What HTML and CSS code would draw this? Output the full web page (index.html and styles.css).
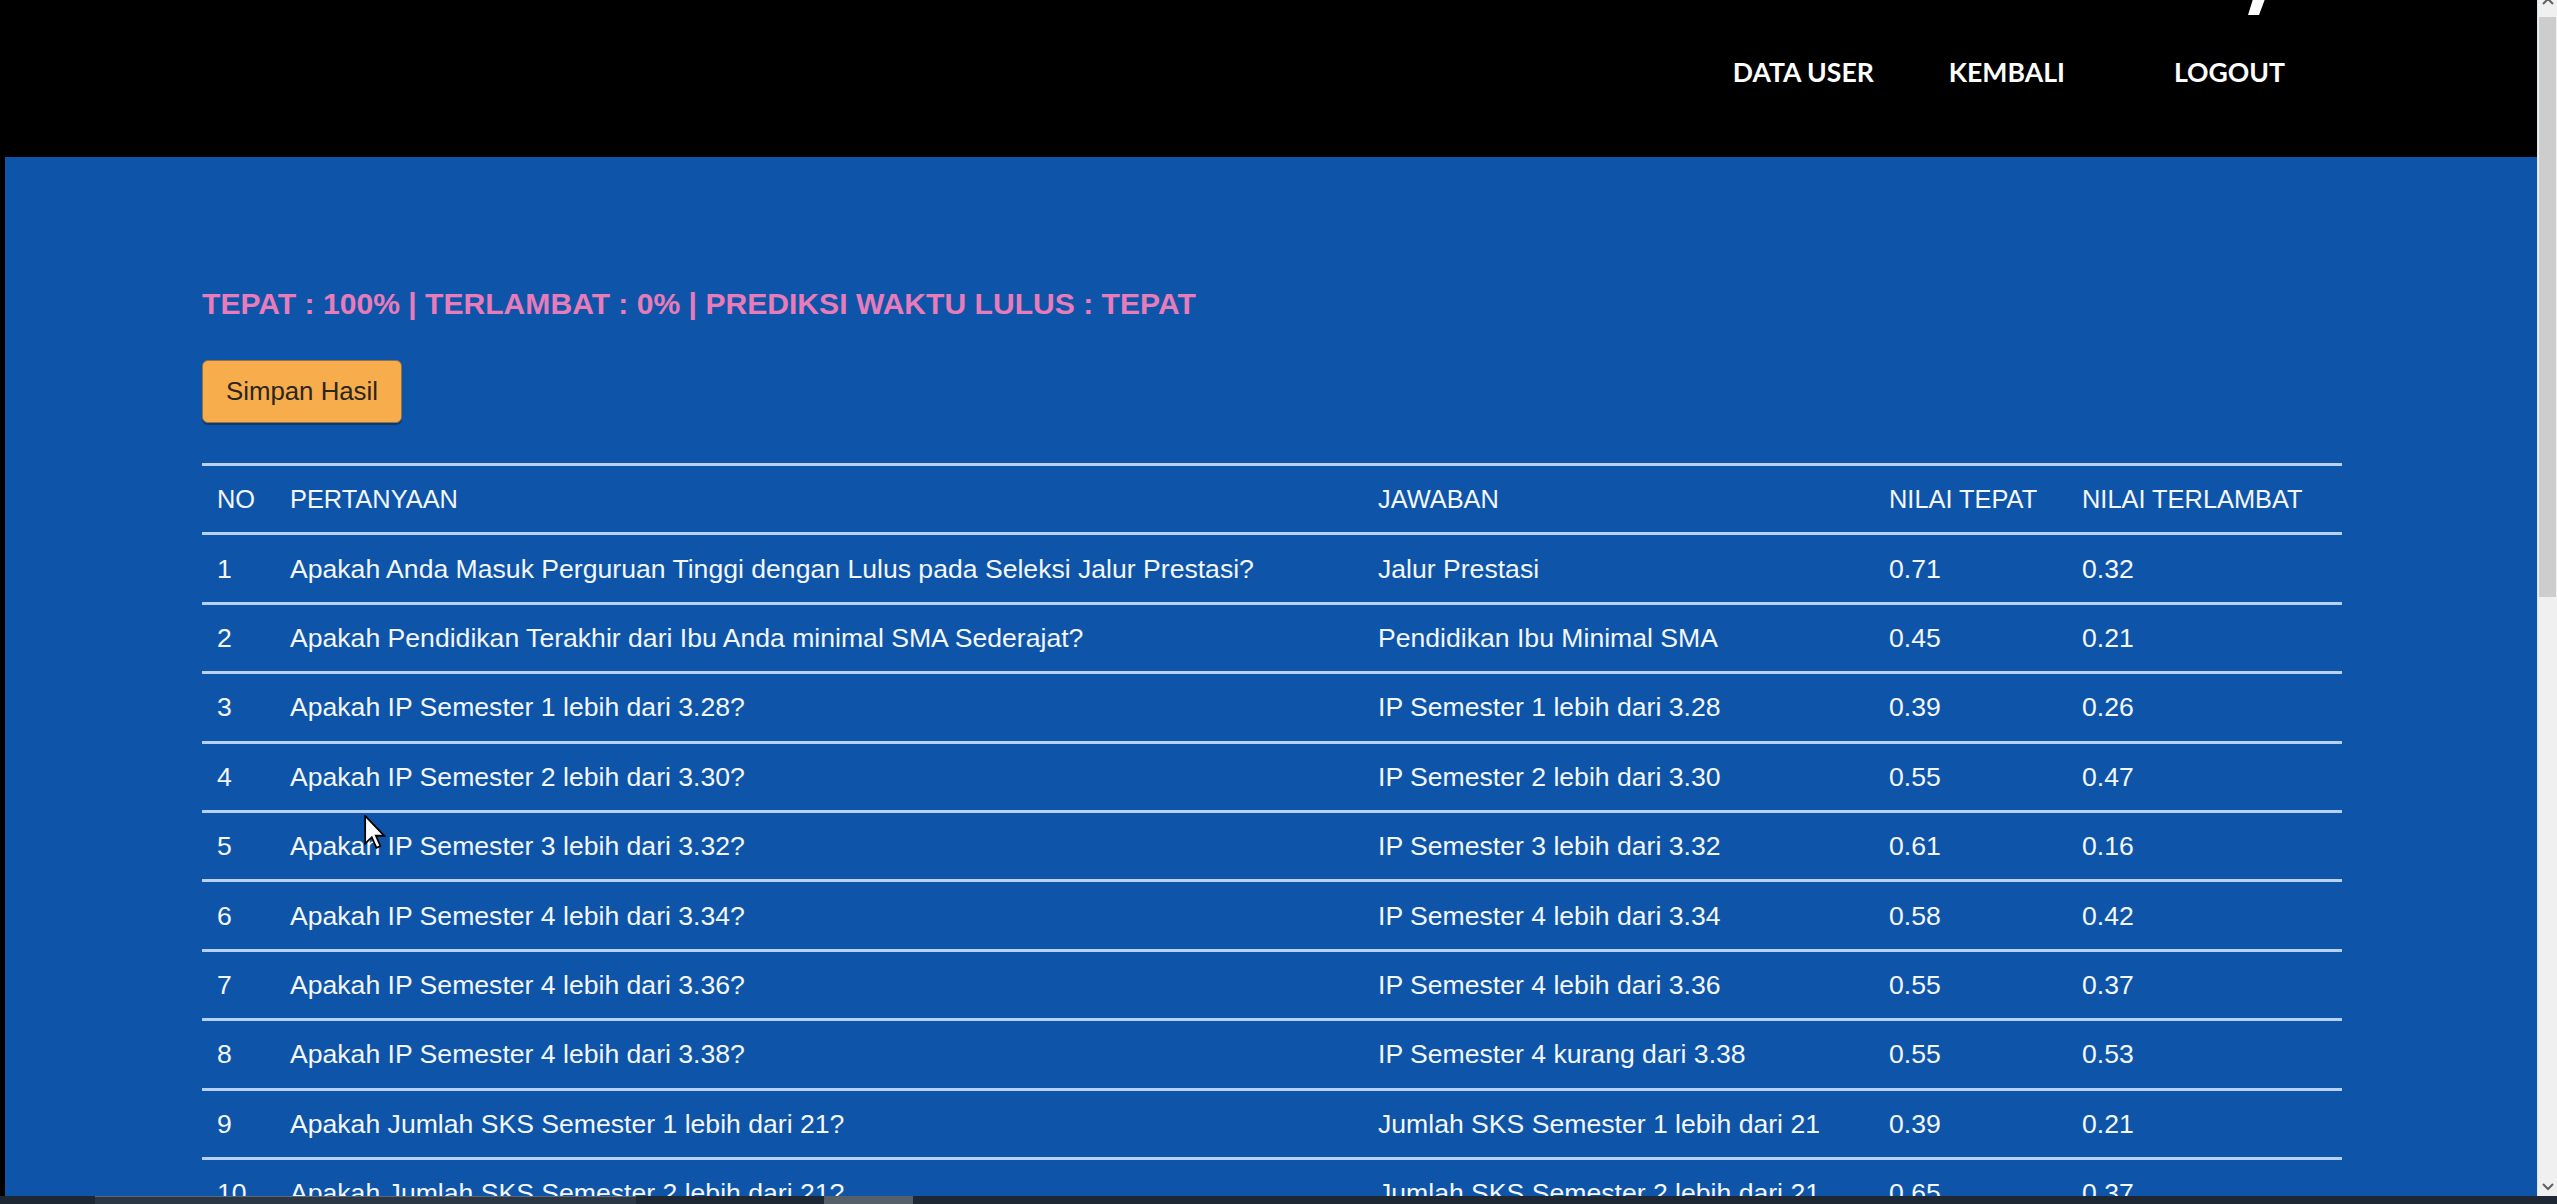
FILE: index.html
```html
<!DOCTYPE html>
<html lang="id">
<head>
<meta charset="utf-8">
<title>Hasil Prediksi</title>
<link rel="stylesheet" href="styles.css">
</head>
<body>
<div class="page">
  <div class="main">
    <header class="header">
      <div class="logo-row">
        <svg class="logo-frag" width="24" height="16" viewBox="0 0 24 16"><polygon points="8,0 20,0 14,16 3,16" fill="#ffffff"/></svg>
      </div>
      <nav class="nav">
        <a class="nav-link" href="#">DATA USER</a>
        <a class="nav-link nav-kembali" href="#">KEMBALI</a>
        <a class="nav-link nav-logout" href="#">LOGOUT</a>
      </nav>
    </header>
    <section class="content">
      <div class="container">
        <h3 class="result">TEPAT : 100% | TERLAMBAT : 0% | PREDIKSI WAKTU LULUS : TEPAT</h3>
        <button class="btn-save" type="button">Simpan Hasil</button>
        <div class="table">
          <div class="row head">
            <div class="cell">NO</div><div class="cell">PERTANYAAN</div><div class="cell">JAWABAN</div><div class="cell">NILAI TEPAT</div><div class="cell">NILAI TERLAMBAT</div>
          </div>
          <div class="row">
            <div class="cell">1</div><div class="cell">Apakah Anda Masuk Perguruan Tinggi dengan Lulus pada Seleksi Jalur Prestasi?</div><div class="cell">Jalur Prestasi</div><div class="cell">0.71</div><div class="cell">0.32</div>
          </div>
          <div class="row">
            <div class="cell">2</div><div class="cell">Apakah Pendidikan Terakhir dari Ibu Anda minimal SMA Sederajat?</div><div class="cell">Pendidikan Ibu Minimal SMA</div><div class="cell">0.45</div><div class="cell">0.21</div>
          </div>
          <div class="row">
            <div class="cell">3</div><div class="cell">Apakah IP Semester 1 lebih dari 3.28?</div><div class="cell">IP Semester 1 lebih dari 3.28</div><div class="cell">0.39</div><div class="cell">0.26</div>
          </div>
          <div class="row">
            <div class="cell">4</div><div class="cell">Apakah IP Semester 2 lebih dari 3.30?</div><div class="cell">IP Semester 2 lebih dari 3.30</div><div class="cell">0.55</div><div class="cell">0.47</div>
          </div>
          <div class="row">
            <div class="cell">5</div><div class="cell">Apakah IP Semester 3 lebih dari 3.32?</div><div class="cell">IP Semester 3 lebih dari 3.32</div><div class="cell">0.61</div><div class="cell">0.16</div>
          </div>
          <div class="row">
            <div class="cell">6</div><div class="cell">Apakah IP Semester 4 lebih dari 3.34?</div><div class="cell">IP Semester 4 lebih dari 3.34</div><div class="cell">0.58</div><div class="cell">0.42</div>
          </div>
          <div class="row">
            <div class="cell">7</div><div class="cell">Apakah IP Semester 4 lebih dari 3.36?</div><div class="cell">IP Semester 4 lebih dari 3.36</div><div class="cell">0.55</div><div class="cell">0.37</div>
          </div>
          <div class="row">
            <div class="cell">8</div><div class="cell">Apakah IP Semester 4 lebih dari 3.38?</div><div class="cell">IP Semester 4 kurang dari 3.38</div><div class="cell">0.55</div><div class="cell">0.53</div>
          </div>
          <div class="row">
            <div class="cell">9</div><div class="cell">Apakah Jumlah SKS Semester 1 lebih dari 21?</div><div class="cell">Jumlah SKS Semester 1 lebih dari 21</div><div class="cell">0.39</div><div class="cell">0.21</div>
          </div>
          <div class="row">
            <div class="cell">10</div><div class="cell">Apakah Jumlah SKS Semester 2 lebih dari 21?</div><div class="cell">Jumlah SKS Semester 2 lebih dari 21</div><div class="cell">0.65</div><div class="cell">0.37</div>
          </div>
        </div>
      </div>
    </section>
  </div>
  <div class="scrollbar">
    <div class="sb-up"><svg width="14" height="8" viewBox="0 0 14 8"><polyline points="2,7 7,2 12,7" fill="none" stroke="#606060" stroke-width="2"/></svg></div>
    <div class="sb-thumb"></div>
    <div class="sb-track"></div>
    <div class="sb-down"><svg width="14" height="8" viewBox="0 0 14 8"><polyline points="2,1 7,6 12,1" fill="none" stroke="#606060" stroke-width="2"/></svg></div>
  </div>
</div>
<svg class="cursor" width="22" height="34" viewBox="0 0 12 19"><path d="M0.5,0.5 L0.5,16 L4.2,12.4 L6.8,18.3 L9,17.3 L6.5,11.6 L11.2,11.6 Z" fill="#ffffff" stroke="#000000" stroke-width="1"/></svg>
<div class="taskbar">
  <div class="tb-seg tb-app"></div>
  <div class="tb-seg tb-light"></div>
</div>
</body>
</html>
```

FILE: styles.css
```css
html, body {
  margin: 0;
  padding: 0;
  height: 100%;
  overflow: hidden;
  background: #000000;
  font-family: "Liberation Sans", Arial, sans-serif;
}

.page {
  display: flex;
  height: 100vh;
}

.main {
  flex: 1;
  display: flex;
  flex-direction: column;
  min-width: 0;
  overflow: hidden;
}

.header {
  height: 157px;
  flex: none;
  background: #000000;
  display: flex;
  flex-direction: column;
}

.logo-row {
  height: 16px;
  padding-left: 2245px;
}

.logo-frag {
  display: block;
  margin-top: -1px;
}

.nav {
  display: flex;
  justify-content: flex-end;
  padding-right: 252px;
  margin-top: 43px;
}

.nav-link {
  font-family: Lato, "Liberation Sans", sans-serif;
  font-weight: 700;
  font-size: 26.6px;
  line-height: 26px;
  color: #ffffff;
  text-decoration: none;
}

.nav-kembali {
  margin-left: 75px;
}

.nav-logout {
  margin-left: 109px;
}

.content {
  flex: 1;
  background: #0e55a9;
  margin-left: 5px;
  padding: 129px 0 0 197px;
}

.container {
  width: 2140px;
}

.result {
  margin: 0;
  font-size: 30.1px;
  line-height: 36px;
  font-weight: 700;
  color: #e87cba;
}

.btn-save {
  display: block;
  margin-top: 38px;
  width: 200px;
  height: 63px;
  padding: 0;
  background: #f7ad4b;
  border: 1px solid #8f7446;
  border-radius: 6px;
  box-shadow: 0 2px 1px rgba(0, 0, 0, 0.35);
  font-family: "Liberation Sans", Arial, sans-serif;
  font-size: 25.8px;
  color: #2a2620;
}

.table {
  margin-top: 40px;
  color: #f3f7fc;
  font-size: 26.6px;
  line-height: 30px;
}

.row {
  display: grid;
  grid-template-columns: 73px 1088px 511px 193px 275px;
  height: 69.4px;
  box-sizing: border-box;
  border-top: 3px solid #b6d1f2;
  align-items: center;
}

.row.head {
  font-size: 25.4px;
}

.cell {
  padding-left: 15px;
  white-space: nowrap;
}

.scrollbar {
  width: 20px;
  flex: none;
  display: flex;
  flex-direction: column;
  background: #f0f0f0;
  border-left: 1px solid #dde6f0;
  box-sizing: border-box;
  padding-bottom: 8px;
}

.sb-up {
  height: 20px;
  display: flex;
  justify-content: center;
  align-items: flex-start;
  margin-top: -3px;
}

.sb-thumb {
  height: 580px;
  background: #cdcdcd;
  margin: 0 1px;
}

.sb-track {
  flex: 1;
}

.sb-down {
  height: 18px;
  display: flex;
  justify-content: center;
  align-items: center;
}

.cursor {
  position: fixed;
  left: 364px;
  top: 815px;
}

.taskbar {
  position: fixed;
  left: 0;
  right: 0;
  bottom: 0;
  height: 8px;
  background: #1d2834;
}

.tb-seg {
  position: absolute;
  top: 0;
  bottom: 0;
}

.tb-app {
  left: 95px;
  width: 541px;
  background: #2b3744;
  border-top: 1px solid #5b6776;
}

.tb-light {
  left: 824px;
  width: 89px;
  background: #56606b;
}
```
